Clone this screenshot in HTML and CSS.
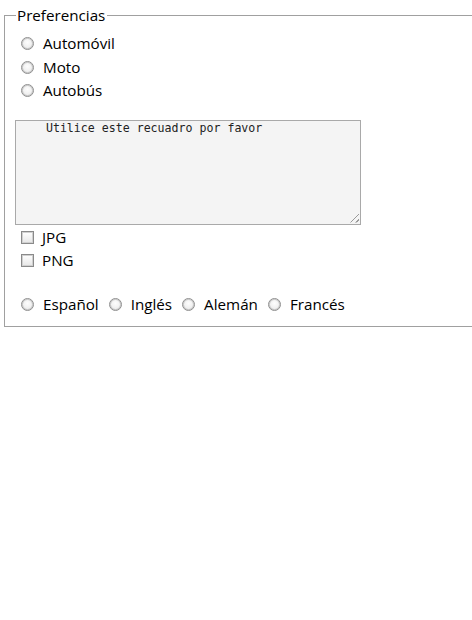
FILE: index.html
```html
<!DOCTYPE html>
<html lang="es">
<head>
<meta charset="utf-8">
<link rel="stylesheet" href="styles.css">
</head>
<body>
<form class="form">
  <fieldset class="prefs">
    <legend class="legend">Preferencias</legend>
    <div class="group">
      <label class="opt"><span class="radio"></span>Automóvil</label>
      <label class="opt"><span class="radio"></span>Moto</label>
      <label class="opt"><span class="radio"></span>Autobús</label>
    </div>
    <div class="area">    Utilice este recuadro por favor<span class="grip"></span></div>
    <div class="group">
      <label class="opt"><span class="check"></span>JPG</label>
      <label class="opt"><span class="check"></span>PNG</label>
    </div>
    <div class="langs">
      <label class="opt"><span class="radio"></span>Español</label>
      <label class="opt"><span class="radio"></span>Inglés</label>
      <label class="opt"><span class="radio"></span>Alemán</label>
      <label class="opt"><span class="radio"></span>Francés</label>
    </div>
  </fieldset>
</form>
</body>
</html>
```

FILE: styles.css
```css
html, body {
  margin: 0;
  padding: 0;
  background: #fff;
}
body {
  font-family: "Open Sans", "Noto Sans", sans-serif;
  font-size: 15.2px;
  color: #000;
}
.form {
  padding: 0 0 0 4px;
  width: 520px;
}
.prefs {
  margin: 0;
  border: 1px solid #a0a0a0;
  padding: 7px 10px 10px 10px;
  margin-top: 5px;
  min-width: 0;
}
.legend {
  padding: 0 2px 0 1px;
  margin-left: 1px;
  line-height: 20px;
}
.group {
  display: flex;
  flex-direction: column;
}
.opt {
  display: flex;
  align-items: center;
  height: 23.5px;
  line-height: 23.5px;
}
.radio {
  box-sizing: border-box;
  width: 13px;
  height: 13px;
  border-radius: 50%;
  border: 1px solid #8f8f8f;
  background: radial-gradient(circle at 50% 40%, #fdfdfd 0%, #ececec 70%, #d8d8d8 100%);
  box-shadow: inset 0 0 0 1px #c9c9c9;
  margin: 0 9px 0 6px;
  flex: none;
}
.check {
  box-sizing: border-box;
  width: 13px;
  height: 13px;
  border: 1px solid #8a8a8a;
  background: linear-gradient(#ffffff, #e6e6e6);
  box-shadow: inset 0 0 0 1px #d0d0d0;
  margin: 0 8px 0 6px;
  flex: none;
}
.area {
  position: relative;
  box-sizing: border-box;
  width: 346px;
  height: 105px;
  margin: 17px 0 1px 0;
  border: 1px solid #a9a9a9;
  background: #f4f4f4;
  font-family: "DejaVu Sans Mono", monospace;
  font-size: 11.6px;
  line-height: 15px;
  padding: 0 2px;
  white-space: pre;
  color: #222;
}
.grip {
  position: absolute;
  right: 1px;
  bottom: 1px;
  width: 12px;
  height: 12px;
  background: repeating-linear-gradient(135deg, transparent 0 2px, #9a9a9a 2px 3px, transparent 3px 4px);
  clip-path: polygon(100% 0, 100% 100%, 0 100%);
}
.langs {
  display: flex;
  margin-top: 20px;
}
.langs .opt .radio {
  margin-left: 6px;
  margin-right: 9px;
}
.langs .opt + .opt .radio {
  margin-left: 10px;
}
```
